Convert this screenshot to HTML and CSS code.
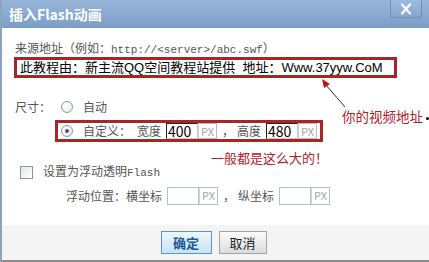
FILE: index.html
```html
<!DOCTYPE html>
<html lang="zh-CN">
<head>
    <meta charset="UTF-8">
    <title>插入Flash动画</title>
    <link rel="stylesheet" href="styles.css">
</head>
<body>
    <div class="dialog">
        <div class="titlebar">
            <span class="title">插入Flash动画</span>
            <span class="close">
                <svg width="14" height="12" viewBox="0 0 14 12"><path d="M3 1.5 L11 10.5 M11 1.5 L3 10.5" stroke="#fff" stroke-width="2.2" stroke-linecap="round"/></svg>
            </span>
        </div>

        <div class="body">
            <div class="label-row">来源地址（例如：<span class="mono">http://&lt;server&gt;/abc.swf</span>）</div>
            <div class="url-box">此教程由：新主流QQ空间教程站提供&nbsp;&nbsp;地址：Www.37yyw.CoM</div>

            <div class="size-row">
                <span class="size-label">尺寸：</span>
                <span class="radio"></span>
                <span>自动</span>
            </div>

            <div class="custom-box">
                <span class="radio checked"></span>
                <span class="custom-label">自定义：</span>
                <span class="field-label">宽度</span>
                <span class="num dark">400</span><span class="unit">PX</span>
                <span class="comma">，</span>
                <span class="field-label">高度</span>
                <span class="num dark">480</span><span class="unit">PX</span>
            </div>

            <div class="float-row">
                <span class="checkbox"></span>
                <span>设置为浮动透明<span class="mono">Flash</span></span>
            </div>

            <div class="pos-row">
                <span class="pos-label">浮动位置：</span>
                <span class="field-label">横坐标</span>
                <span class="num"></span><span class="unit">PX</span>
                <span class="comma">，</span>
                <span class="field-label">纵坐标</span>
                <span class="num"></span><span class="unit">PX</span>
            </div>
        </div>

        <div class="footer">
            <button class="btn btn-ok">确定</button>
            <button class="btn">取消</button>
        </div>

        <!-- 标注 -->
        <svg class="arrow" width="40" height="40" viewBox="0 0 40 40">
            <path d="M26 30 L6 7" stroke="#3a2a2a" stroke-width="1"/>
            <path d="M3 2 L11 7 L5 11 Z" fill="#c0101c"/>
        </svg>
        <span class="note note-url">你的视频地址</span>
        <span class="dot"></span>
        <span class="note note-size">一般都是这么大的！</span>
    </div>
</body>
</html>
```

FILE: styles.css
```css
:root {
    --red: #a8242b;
    --note: #b0202a;
    --text: #555;
}

html, body {
    margin: 0;
    padding: 0;
}

body {
    font-family: "Noto Sans CJK SC", "Liberation Sans", sans-serif;
    font-size: 12px;
    color: var(--text);
    background: #fff;
}

.dialog {
    position: relative;
    width: 429px;
    height: 262px;
    display: flex;
    flex-direction: column;
    box-sizing: border-box;
    border-left: 2px solid #8ea2bd;
    border-bottom: 2px solid #8c8c8c;
    overflow: hidden;
}

.titlebar {
    height: 28px;
    flex: none;
    display: flex;
    align-items: flex-start;
    justify-content: space-between;
    background: linear-gradient(#98b6da, #7c9dc7);
    margin-left: -2px;
}

.title {
    margin: 5px 0 0 9px;
    color: #fff;
    font-weight: bold;
    font-size: 14px;
    line-height: 18px;
}

.close {
    width: 30px;
    height: 17px;
    margin-right: 7px;
    display: flex;
    align-items: center;
    justify-content: center;
    border: 1px solid #6f8fba;
    border-top: none;
    border-radius: 0 0 3px 3px;
    background: linear-gradient(#9dbbde, #86a6cf);
}

.body {
    flex: 1;
    padding: 12px 0 0 12px;
    line-height: 16px;
}

.mono {
    font-family: "Liberation Mono", monospace;
    font-size: 11px;
}

.label-row {
    height: 16px;
    padding-left: 1px;
}

.url-box {
    margin-top: 1px;
    width: 374px;
    height: 15px;
    border: 3px solid var(--red);
    padding-left: 3px;
    font-family: "Liberation Sans", "Noto Sans CJK SC", sans-serif;
    font-size: 13px;
    line-height: 15px;
    color: #000;
    white-space: nowrap;
    overflow: hidden;
}

.size-row {
    margin-top: 20px;
    height: 18px;
    display: flex;
    align-items: center;
}

.size-label {
    width: 46px;
    padding-left: 1px;
}

.radio {
    width: 10px;
    height: 10px;
    border: 1px solid #8b98a8;
    border-radius: 50%;
    background: radial-gradient(circle at 40% 35%, #fff, #e2e6ea);
    margin-right: 10px;
    flex: none;
    position: relative;
}

.radio.checked::after {
    content: "";
    position: absolute;
    left: 3px;
    top: 3px;
    width: 4px;
    height: 4px;
    border-radius: 50%;
    background: #3d5a80;
}

.custom-box {
    margin: 4px 0 0 41px;
    width: 259px;
    height: 16px;
    border: 3px solid var(--red);
    display: flex;
    align-items: center;
    padding-left: 3px;
}

.custom-label {
    width: 54px;
}

.field-label {
    margin-right: 5px;
}

.num {
    width: 32px;
    height: 16px;
    box-sizing: border-box;
    border: 1px solid #b5c2cf;
    font-size: 14px;
    line-height: 14px;
    color: #000;
    padding-left: 1px;
    background: #fff;
}

.num.dark {
    border-color: #222 #c8c8c8 #c8c8c8 #222;
}

.unit {
    height: 16px;
    box-sizing: border-box;
    border: 1px solid #b5bcc4;
    border-left-color: #cfd4da;
    color: #a0a6ad;
    font-size: 11px;
    line-height: 14px;
    padding: 0 2px;
}

.comma {
    width: 20px;
    padding-left: 5px;
    box-sizing: border-box;
}

.float-row {
    margin-top: 22px;
    height: 16px;
    display: flex;
    align-items: center;
}

.checkbox {
    width: 11px;
    height: 11px;
    margin: 0 10px 0 6px;
    border: 1px solid #8e959c;
    background: linear-gradient(135deg, #e4e6e9, #fff);
}

.pos-row {
    margin: 7px 0 0 52px;
    height: 18px;
    display: flex;
    align-items: center;
}

.pos-row .num,
.pos-row .unit {
    height: 18px;
}

.pos-label {
    width: 60px;
}

.footer {
    height: 35px;
    flex: none;
    background: #f4f4f4;
    display: flex;
    justify-content: center;
    align-items: flex-start;
    gap: 7px;
    padding-top: 6px;
    box-sizing: border-box;
    padding-right: 4px;
}

.btn {
    height: 23px;
    width: 48px;
    border: 1px solid #a3a3a3;
    background: linear-gradient(#fbfbfb, #dcdcdc);
    font-family: inherit;
    font-size: 13px;
    color: #222;
    padding: 0;
}

.btn-ok {
    width: 51px;
    border-color: #5c94c4;
    background: linear-gradient(#eef7fd, #c7e3f5);
    color: #1d5a98;
    font-weight: bold;
}

.arrow {
    position: absolute;
    left: 317px;
    top: 77px;
}

.note {
    position: absolute;
    color: var(--note);
    white-space: nowrap;
}

.note-url {
    left: 340px;
    top: 106px;
    font-size: 13.5px;
}

.note-size {
    left: 209px;
    top: 148px;
    font-size: 13px;
}

.dot {
    position: absolute;
    left: 424px;
    top: 117px;
    width: 3px;
    height: 3px;
    background: #000;
    border-radius: 50%;
}
```
